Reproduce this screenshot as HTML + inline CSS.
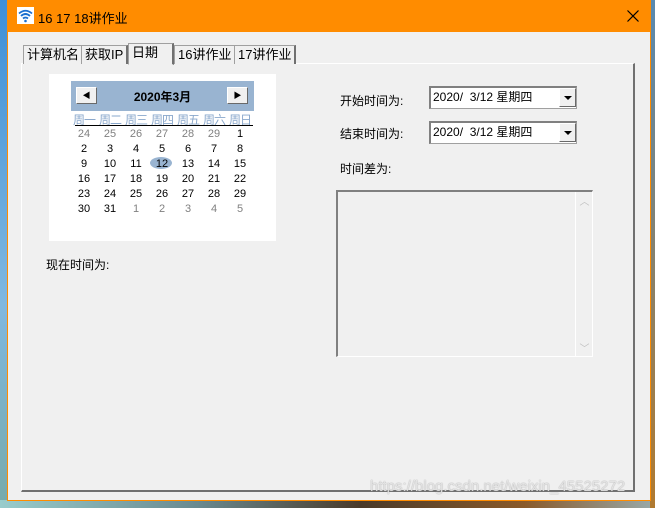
<!DOCTYPE html>
<html><head><meta charset="utf-8"><style>
*{margin:0;padding:0;box-sizing:border-box}
body{width:655px;height:508px;overflow:hidden;position:relative;background:#6b8fa0;font-family:"Liberation Sans","Noto Sans CJK SC",sans-serif;font-size:12px;color:#000}
.abs{position:absolute}
.win{left:7px;top:0;width:644px;height:501px;background:#f0f0f0;border:1px solid #ff8c00}
.title{left:0;top:0;width:642px;height:31px;background:#ff8c00}
.tab{position:absolute;top:44px;height:19px;border:1px solid #a0a0a0;border-bottom:none;background:#f0f0f0;font-size:13px;line-height:17px;padding:0 3px;border-right:2px solid #707070}
.cal td{width:26px;text-align:center;font-size:11px;height:15px;line-height:15px;padding:0}
.dn td{width:26px;text-align:center;font-size:12px;color:#8aa8cc;padding:0;letter-spacing:-1px}
.g{color:#808080}
.lbl{font-size:12px}
.combo{position:absolute;left:429px;width:148px;height:23px;background:#fff;border:1px solid #a0a0a0;border-top:2px solid #808080;border-left:2px solid #808080;font-size:12px;line-height:19px;padding-left:2px}
.combo .b{position:absolute;right:0;top:0;width:17px;height:19px;background:#f0f0f0;border:1px solid #fff;border-right-color:#696969;border-bottom-color:#696969}
.combo .b:after{content:"";position:absolute;left:4px;top:7px;border:4px solid transparent;border-top:4px solid #000;border-bottom:none}
</style></head><body>
<div class="abs" style="left:0;top:0;width:7px;height:508px;background:linear-gradient(#3d8fd8,#80b8e0 60%,#7aa)"></div>
<div class="abs" style="left:0;top:500px;width:655px;height:8px;background:linear-gradient(90deg,#9cc 0%,#6a8a90 30%,#4a3a2a 55%,#8a5a2a 80%,#9aa)"></div>
<div class="abs" style="left:650px;top:0;width:5px;height:508px;background:linear-gradient(#5a8ab0,#b07a30)"></div>
<div class="abs win">
<div class="abs title">
<svg class="abs" style="left:9px;top:6px" width="17" height="17" viewBox="0 0 17 17"><rect width="17" height="17" fill="#fff"/><path d="M2 6.5Q8.5 1 15 6.5M4 9Q8.5 5 13 9M6 11.5Q8.5 9.5 11 11.5" stroke="#1a6fd0" stroke-width="1.8" fill="none"/><circle cx="8.5" cy="14" r="1.3" fill="#1a6fd0"/></svg>
<div class="abs" style="left:30px;top:7px;font-size:13px">16 17 18讲作业</div>
<svg class="abs" style="left:619px;top:9px" width="12" height="12" viewBox="0 0 12 12"><path d="M0.5 0.5L11.5 11.5M11.5 0.5L0.5 11.5" stroke="#000" stroke-width="1.2"/></svg>
</div>
<div class="abs" style="left:13px;top:62px;width:614px;height:429px;border:1px solid #fff;border-right:2px solid #707070;border-bottom:2px solid #707070"></div>
<div class="tab" style="left:15px">计算机名</div>
<div class="tab" style="left:73px">获取IP</div>
<div class="tab" style="left:120px;top:42px;height:22px;width:46px;border-bottom:1px solid #f0f0f0">日期</div>
<div class="tab" style="left:166px">16讲作业</div>
<div class="tab" style="left:226px">17讲作业</div>
<div class="abs" style="left:41px;top:73px;width:227px;height:167px;background:#fff"></div>
<div class="abs" style="left:63px;top:80px;width:183px;height:30px;background:#99b4d1">
<div class="abs" style="left:5px;top:6px;width:21px;height:17px;background:#f0f0f0;border:1px solid #fff;border-right-color:#696969;border-bottom-color:#696969;font-size:8px;text-align:center;line-height:15px">◀</div>
<div class="abs" style="left:0;top:7px;width:183px;text-align:center;font-weight:bold;font-size:12px">2020年3月</div>
<div class="abs" style="left:156px;top:6px;width:21px;height:17px;background:#f0f0f0;border:1px solid #fff;border-right-color:#696969;border-bottom-color:#696969;font-size:8px;text-align:center;line-height:15px">▶</div>
</div>
<table class="abs dn" style="left:63px;top:110px;border-collapse:collapse"><tr><td>周一</td><td>周二</td><td>周三</td><td>周四</td><td>周五</td><td>周六</td><td>周日</td></tr></table>
<div class="abs" style="left:67px;top:124px;width:178px;height:1px;background:#000"></div>
<div class="abs" style="left:142px;top:156px;width:22px;height:12px;border-radius:50%;background:#99b4d1"></div>
<table class="abs cal" style="left:63px;top:126px;border-collapse:collapse">
<tr><td class="g">24</td><td class="g">25</td><td class="g">26</td><td class="g">27</td><td class="g">28</td><td class="g">29</td><td>1</td></tr>
<tr><td>2</td><td>3</td><td>4</td><td>5</td><td>6</td><td>7</td><td>8</td></tr>
<tr><td>9</td><td>10</td><td>11</td><td>12</td><td>13</td><td>14</td><td>15</td></tr>
<tr><td>16</td><td>17</td><td>18</td><td>19</td><td>20</td><td>21</td><td>22</td></tr>
<tr><td>23</td><td>24</td><td>25</td><td>26</td><td>27</td><td>28</td><td>29</td></tr>
<tr><td>30</td><td>31</td><td class="g">1</td><td class="g">2</td><td class="g">3</td><td class="g">4</td><td class="g">5</td></tr>
</table>
<div class="abs lbl" style="left:38px;top:255px">现在时间为:</div>
<div class="abs lbl" style="left:332px;top:91px">开始时间为:</div>
<div class="abs lbl" style="left:332px;top:124px">结束时间为:</div>
<div class="abs lbl" style="left:332px;top:159px">时间差为:</div>
</div>
<div class="combo" style="top:86px">2020/&nbsp; 3/12 星期四<div class="b"></div></div>
<div class="combo" style="top:121px">2020/&nbsp; 3/12 星期四<div class="b"></div></div>
<div class="abs" style="left:336px;top:190px;width:257px;height:167px;border:1px solid #fff;border-top:2px solid #808080;border-left:2px solid #808080;background:#f0f0f0">
<div class="abs" style="right:0;top:0;width:17px;height:164px;background:#f0f0f0;border-left:1px solid #fff;color:#c0c0c0;font-size:10px;text-align:center">
<div style="position:absolute;top:1px;width:17px">︿</div><div style="position:absolute;bottom:1px;width:17px">﹀</div></div>
</div>
<div class="abs" style="left:370px;top:478px;font-size:15px;color:rgba(255,255,255,.7);text-shadow:0 0 1px #888">https://blog.csdn.net/weixin_45525272</div>
</body></html>
